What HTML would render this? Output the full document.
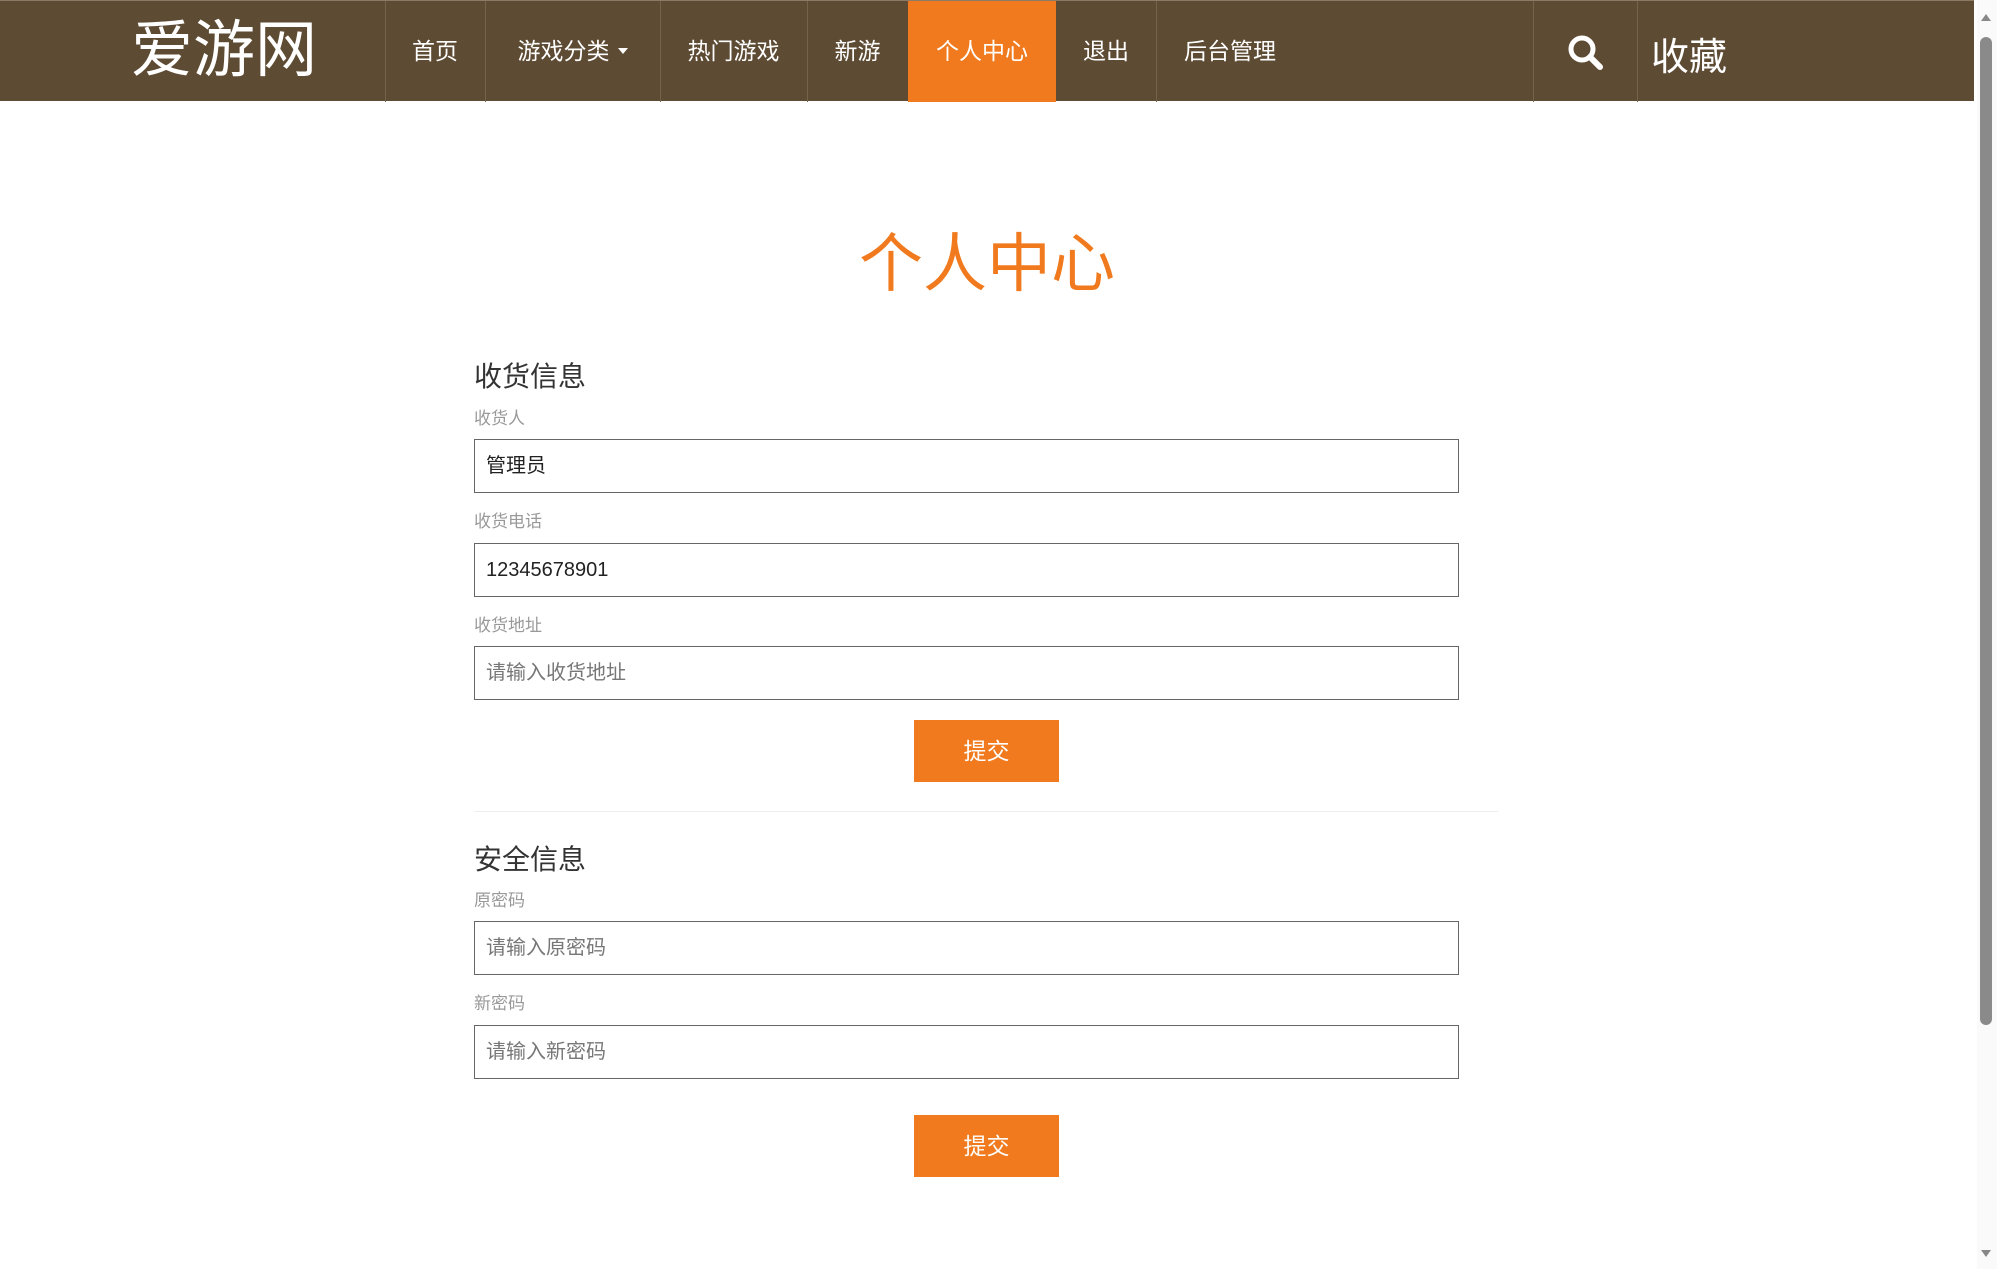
<!DOCTYPE html>
<html><head><meta charset="utf-8">
<style>
*{margin:0;padding:0;box-sizing:border-box}
body{width:1997px;height:1269px;background:#fff;position:relative;overflow:hidden;font-family:"Liberation Sans","Noto Sans CJK SC",sans-serif}
.hdr{position:absolute;left:0;top:0;width:1974px;height:101px;background:#5e4b34;border-top:1px solid #8a7a66}
.a{position:absolute}
.logo{left:131px;top:12px;font-size:62px;color:#fff;line-height:76px}
.div{top:0;width:1px;height:101px;background:#76634b}
.nav{top:0;height:101px;line-height:101px;font-size:23px;color:#fff;text-align:center}
.act{left:908px;width:148px;background:#f07a1d}
.title{left:0;width:1974px;top:224px;text-align:center;font-size:64px;color:#f07a1d;line-height:80px}
.h{left:474px;font-size:28px;color:#333;line-height:34px}
.lbl{left:474px;font-size:17px;color:#999;line-height:20px}
.inp{left:474px;width:985px;height:54px;border:1px solid #666;font-size:20px;line-height:52px;padding-left:11px;color:#222}
.ph{color:#777}
.btn{left:914px;width:145px;height:62px;background:#f07a1d;color:#fff;font-size:23px;line-height:62px;text-align:center}
.caret{display:inline-block;width:0;height:0;border-left:5px solid transparent;border-right:5px solid transparent;border-top:6px solid #fff;vertical-align:middle;margin-left:8px;position:relative;top:-2px}
</style></head><body>
<div class="hdr">
<div class="a logo">爱游网</div>
<div class="a div" style="left:385px"></div>
<div class="a div" style="left:485px"></div>
<div class="a div" style="left:660px"></div>
<div class="a div" style="left:807px"></div>
<div class="a div" style="left:1156px"></div>
<div class="a div" style="left:1533px"></div>
<div class="a div" style="left:1637px"></div>
<div class="a nav" style="left:385px;width:100px">首页</div>
<div class="a nav" style="left:485px;width:175px">游戏分类<span class="caret"></span></div>
<div class="a nav" style="left:660px;width:147px">热门游戏</div>
<div class="a nav" style="left:807px;width:101px">新游</div>
<div class="a nav act">个人中心</div>
<div class="a nav" style="left:1056px;width:100px">退出</div>
<div class="a nav" style="left:1156px;width:148px">后台管理</div>
<svg class="a" style="left:1566px;top:32px" width="40" height="40" viewBox="0 0 40 40"><circle cx="16" cy="16" r="11" fill="none" stroke="#fff" stroke-width="5"/><line x1="24" y1="24" x2="34" y2="34" stroke="#fff" stroke-width="6" stroke-linecap="round"/></svg>
<div class="a" style="left:1651px;top:34px;font-size:38px;color:#fff;line-height:46px">收藏</div>
</div>
<div class="a" style="left:1977px;top:0;width:20px;height:1269px;background:#fafafa"></div>
<div class="a" style="left:1980px;top:37px;width:12px;height:988px;background:#8a8a8a;border-radius:6px"></div>
<div class="a" style="left:1981px;top:14px;width:0;height:0;border-left:5px solid transparent;border-right:5px solid transparent;border-bottom:7px solid #888"></div>
<div class="a" style="left:1981px;top:1250px;width:0;height:0;border-left:5px solid transparent;border-right:5px solid transparent;border-top:7px solid #888"></div>

<div class="a title">个人中心</div>
<div class="a h" style="top:360px">收货信息</div>
<div class="a lbl" style="top:409px">收货人</div>
<div class="a inp" style="top:439px">管理员</div>
<div class="a lbl" style="top:512px">收货电话</div>
<div class="a inp" style="top:543px">12345678901</div>
<div class="a lbl" style="top:616px">收货地址</div>
<div class="a inp ph" style="top:646px">请输入收货地址</div>
<div class="a btn" style="top:720px">提交</div>
<div class="a" style="left:474px;top:811px;width:1024px;height:1px;background:#eee"></div>
<div class="a h" style="top:843px">安全信息</div>
<div class="a lbl" style="top:891px">原密码</div>
<div class="a inp ph" style="top:921px">请输入原密码</div>
<div class="a lbl" style="top:994px">新密码</div>
<div class="a inp ph" style="top:1025px">请输入新密码</div>
<div class="a btn" style="top:1115px">提交</div>
</body></html>
